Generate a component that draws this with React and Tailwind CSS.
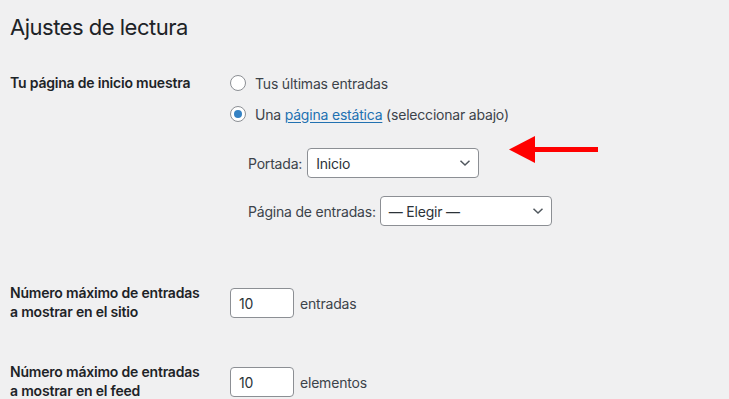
import React from "react";

function Chevron() {
  return (
    <svg width="12" height="8" viewBox="0 0 12 8" className="shrink-0">
      <path d="M1.5 1.8 L6 6 L10.5 1.8" fill="none" stroke="#50575e" strokeWidth="1.5" />
    </svg>
  );
}

function Select({ value, width }) {
  return (
    <div
      className={`flex h-[30px] items-center justify-between rounded-[4px] border border-[#8c8f94] bg-white pl-[8px] pr-[7px] text-[#2c3338] ${width}`}
    >
      <span>{value}</span>
      <Chevron />
    </div>
  );
}

function Radio({ checked }) {
  return (
    <span className="flex h-[16px] w-[16px] shrink-0 items-center justify-center rounded-full border border-[#8c8f94] bg-white">
      {checked && <span className="h-[8px] w-[8px] rounded-full bg-[#3582c4]" />}
    </span>
  );
}

function NumberInput({ value }) {
  return (
    <div className="flex h-[30px] w-[64px] items-center rounded-[4px] border border-[#8c8f94] bg-white pl-[8px] text-[#2c3338]">
      {value}
    </div>
  );
}

export default function App() {
  return (
    <div className="min-h-screen w-full overflow-hidden bg-[#f0f0f1] font-['Inter','Noto_Sans',sans-serif] text-[14px] tracking-[-0.2px] text-[#3c434a]">
      <h1 className="pl-[10px] pt-[13px] text-[22px] leading-[29px] tracking-[-0.5px] text-[#1d2327]">Ajustes de lectura</h1>

      {/* Página de inicio */}
      <div className="mt-[31px] flex">
        <div className="w-[230px] shrink-0 pl-[10px] font-semibold leading-[19px] text-[#1d2327]">
          Tu página de inicio muestra
        </div>
        <div className="relative flex-1">
          <div className="flex h-[20px] items-center gap-[9px]">
            <Radio />
            <span>Tus últimas entradas</span>
          </div>
          <div className="mt-[11px] flex h-[20px] items-center gap-[9px]">
            <Radio checked />
            <span>
              Una <span className="text-[#2271b1] underline underline-offset-2">página estática</span> (seleccionar abajo)
            </span>
          </div>
          <div className="mt-[24px] flex items-center gap-[5px] pl-[18px]">
            <span>Portada:</span>
            <Select value="Inicio" width="w-[172px]" />
          </div>
          <div className="mt-[18px] flex items-center gap-[4px] pl-[18px]">
            <span>Página de entradas:</span>
            <Select value="— Elegir —" width="w-[172px]" />
          </div>

          {/* flecha roja */}
          <svg width="92" height="30" viewBox="0 0 92 30" className="absolute left-[279px] top-[62px]">
            <path d="M0 14.5 L26 1 L26 28 Z" fill="#ff0000" />
            <rect x="25" y="12" width="64" height="5" fill="#ff0000" />
          </svg>
        </div>
      </div>

      {/* Entradas en el sitio */}
      <div className="mt-[57px] flex">
        <div className="w-[230px] shrink-0 pl-[10px] font-semibold leading-[19px] text-[#1d2327]">
          Número máximo de entradas
          <br />a mostrar en el sitio
        </div>
        <div className="mt-[2px] flex items-center gap-[6px]">
          <NumberInput value="10" />
          <span>entradas</span>
        </div>
      </div>

      {/* Entradas en el feed */}
      <div className="mt-[41px] flex">
        <div className="w-[230px] shrink-0 pl-[10px] font-semibold leading-[19px] text-[#1d2327]">
          Número máximo de entradas
          <br />a mostrar en el feed
        </div>
        <div className="mt-[2px] flex items-center gap-[6px]">
          <NumberInput value="10" />
          <span>elementos</span>
        </div>
      </div>
    </div>
  );
}
